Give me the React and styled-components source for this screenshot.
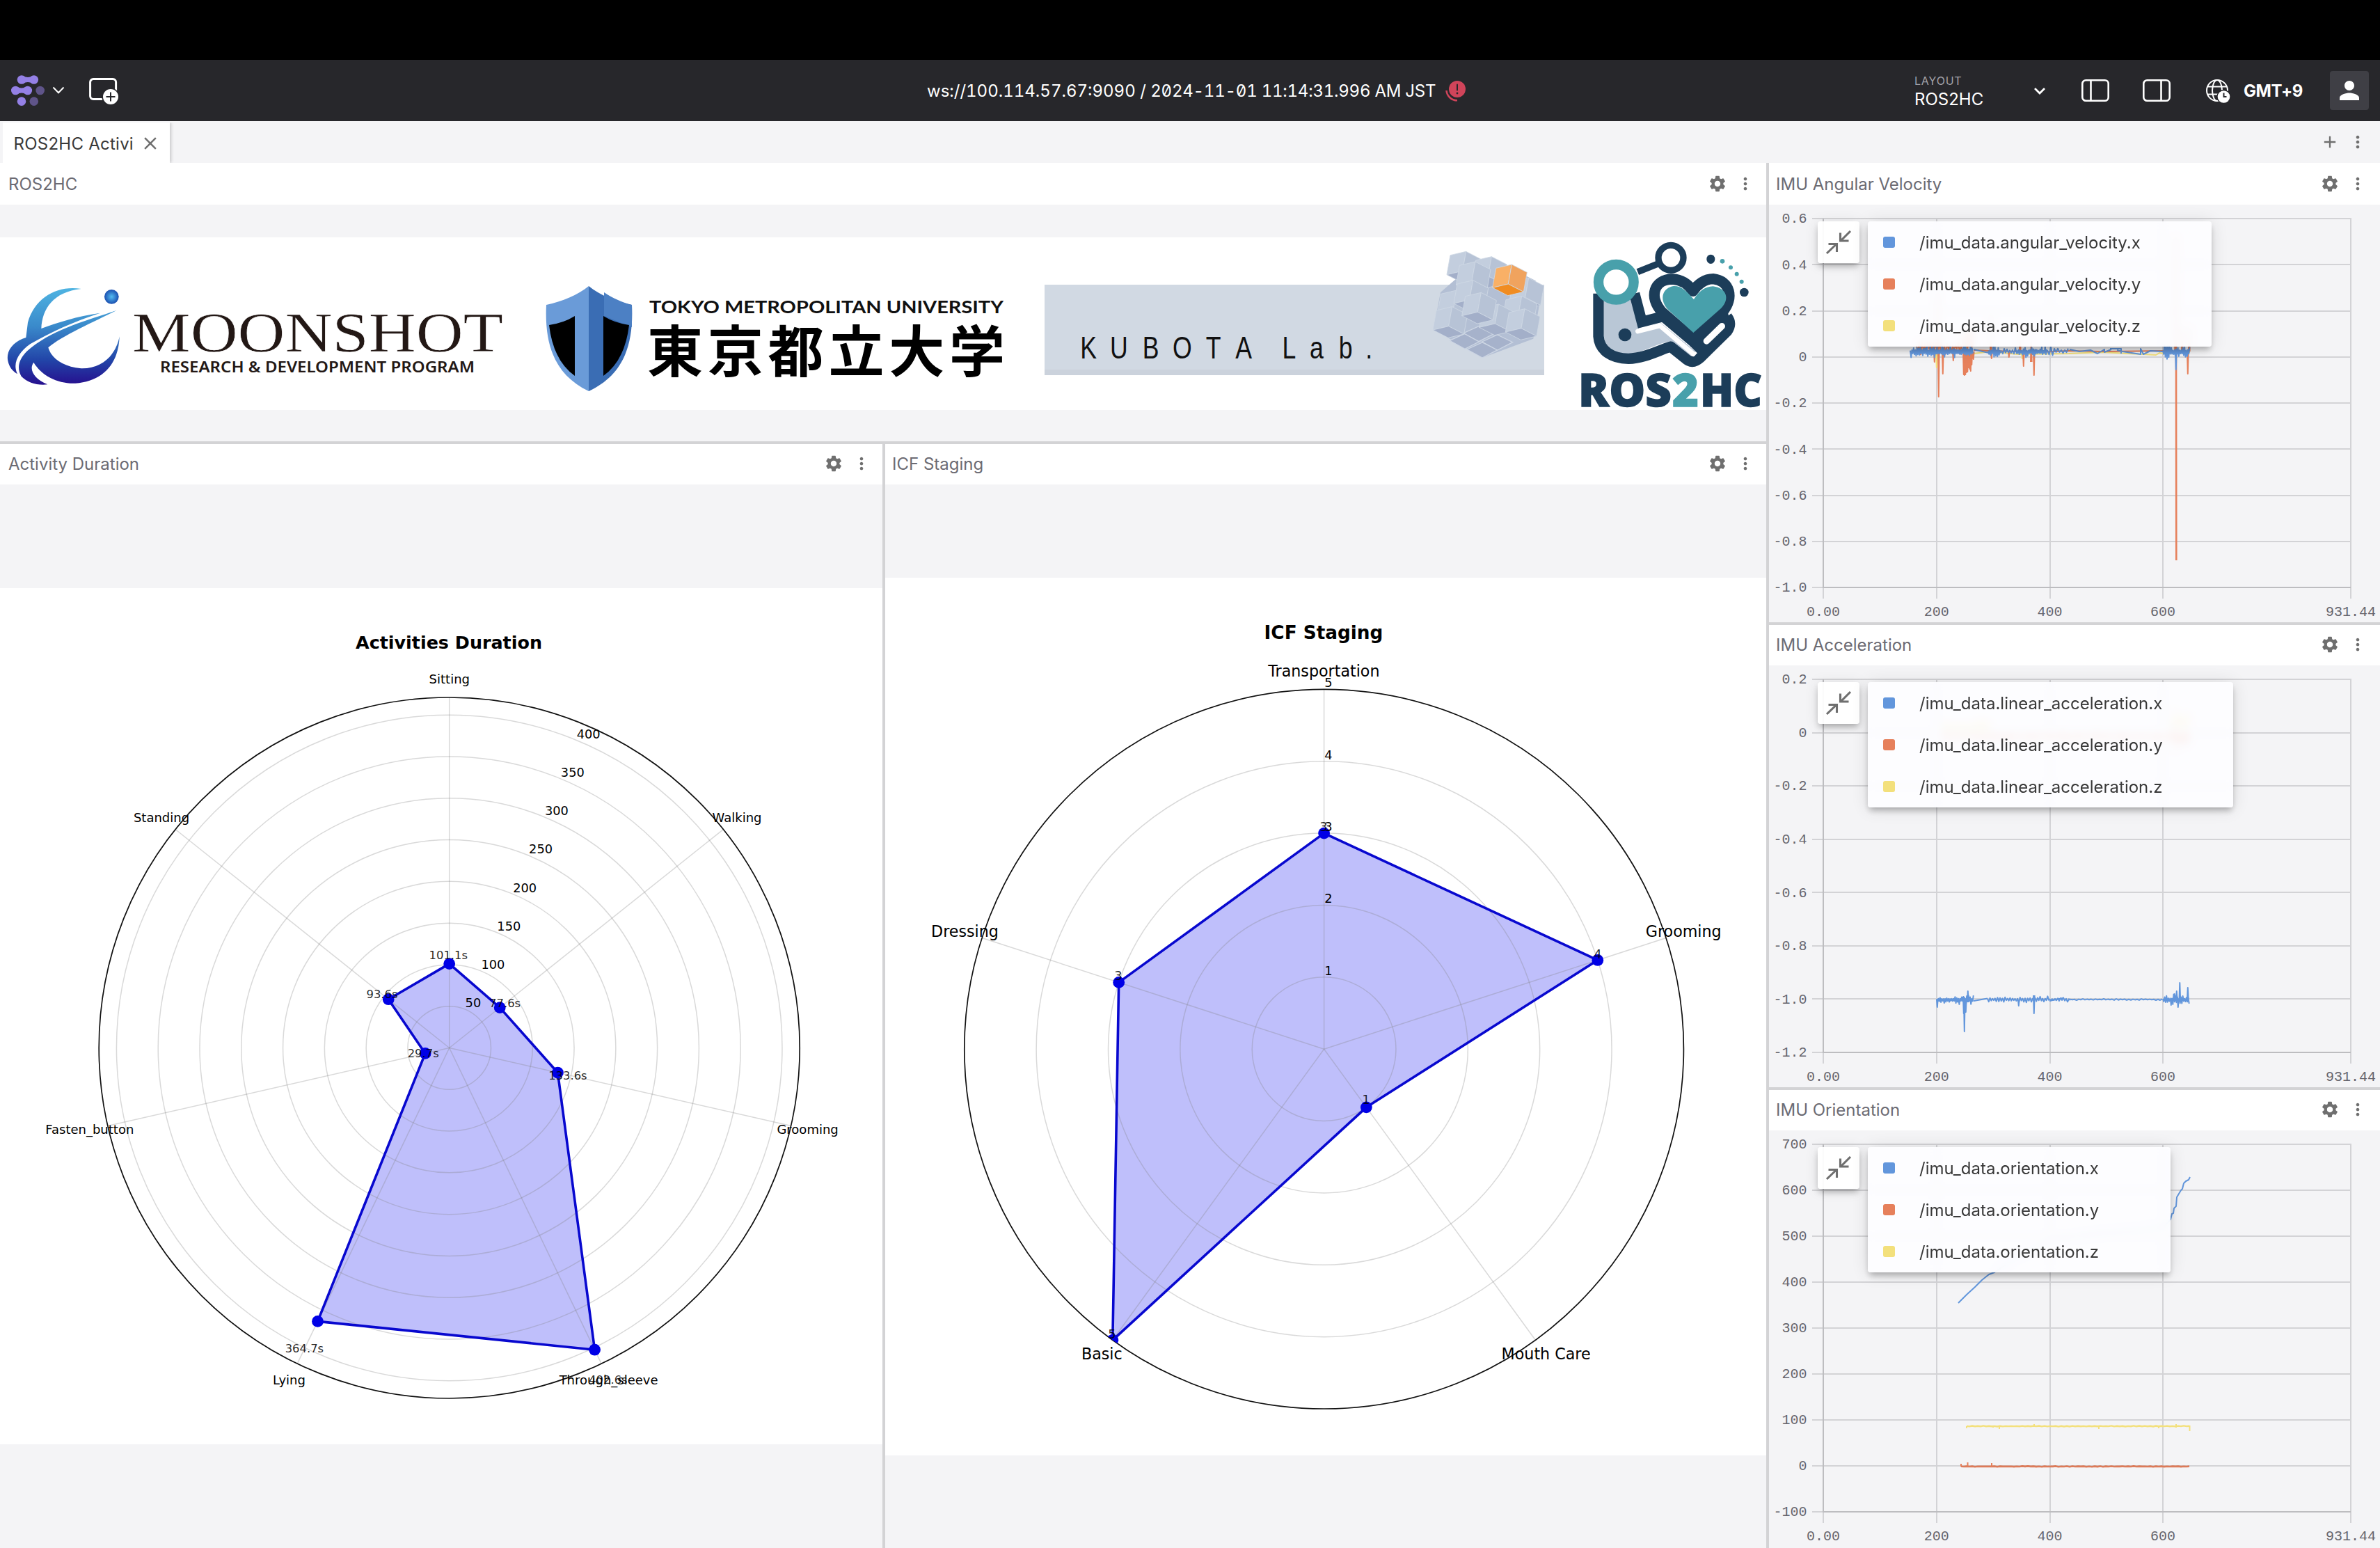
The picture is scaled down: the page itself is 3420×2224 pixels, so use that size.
import React from "react";
import styled, { createGlobalStyle } from "styled-components";
import { MdSettings, MdMoreVert, MdAdd, MdClose, MdPerson } from "react-icons/md";

const GlobalStyle = createGlobalStyle`
  * { box-sizing: border-box; }
  body { margin: 0; background: #000; font-family: Inter, "Liberation Sans", sans-serif; }
  svg { display: block; flex: none; }
`;

/* ---------- layout ---------- */

const Screen = styled.div`
  display: flex;
  flex-direction: column;
  width: 3420px;
  height: 2224px;
  padding-top: 86px;
  overflow: hidden;
  background: #000;
`;

const AppBar = styled.header`
  display: flex;
  align-items: center;
  flex: none;
  height: 88px;
  padding: 0 16px;
  color: #fff;
  background: #27272b;
`;

const BarStart = styled.div`
  display: flex;
  align-items: center;
  width: 1316px;
`;

const BarSource = styled.div`
  display: flex;
  align-items: center;
  gap: 12px;
  font-size: 24px;
  font-feature-settings: "tnum";
  white-space: pre;
`;

const Timestamp = styled.span`
  font-feature-settings: "tnum", "zero";
  letter-spacing: -0.24px;
`;

const BarEnd = styled.div`
  display: flex;
  align-items: center;
  margin-left: auto;
`;

const LayoutSelect = styled.div`
  display: flex;
  flex-direction: column;
  width: 164px;
  padding-top: 2px;
  line-height: 1;
`;

const LayoutCaption = styled.span`
  margin-bottom: 7px;
  color: #a3a2a9;
  font-size: 16px;
  letter-spacing: 0.8px;
`;

const LayoutName = styled.span`
  font-size: 24px;
`;

const BarIcon = styled.span`
  display: flex;
  margin-left: ${(p) => p.$gap}px;
`;

const ZoneLabel = styled.span`
  width: 84px;
  margin-left: 16px;
  font-size: 24px;
  font-weight: 700;
  letter-spacing: -0.4px;
  white-space: nowrap;
`;

const Avatar = styled.div`
  display: flex;
  align-items: center;
  justify-content: center;
  width: 56px;
  height: 56px;
  margin-left: 40px;
  border-radius: 4px;
  color: #fff;
  background: #3f3f45;
`;

const TabBar = styled.nav`
  display: flex;
  align-items: flex-end;
  flex: none;
  height: 60px;
  padding: 0 18px 0 4px;
  background: #f4f4f6;
`;

const Tab = styled.div`
  display: flex;
  align-items: center;
  gap: 9px;
  width: 240px;
  height: 58px;
  padding: 2px 0 0 15.5px;
  color: #393939;
  font-size: 24px;
  letter-spacing: 0.25px;
  white-space: nowrap;
  background: #fff;
  box-shadow: 2px 0 4px rgba(0, 0, 0, 0.18);
  clip-path: inset(0 -8px 0 0);
`;

const Tools = styled.div`
  display: flex;
  align-items: center;
  gap: 12px;
  height: 60px;
  margin-left: auto;
  color: #6f6f6f;
`;

const Workspace = styled.main`
  display: grid;
  flex: 1;
  grid-template-columns: 2538px 878px;
  gap: 4px;
  min-height: 0;
  background: #d3d3d5;
`;

const LeftArea = styled.div`
  display: grid;
  grid-template-rows: 400px 1586px;
  gap: 4px;
`;

const RadarRow = styled.div`
  display: grid;
  grid-template-columns: 1268px 1266px;
  gap: 4px;
`;

const PlotArea = styled.div`
  display: grid;
  grid-template-rows: 660px 664px 658px;
  gap: 4px;
`;

const PanelBox = styled.section`
  display: flex;
  flex-direction: column;
  min-width: 0;
  min-height: 0;
  background: #f4f4f6;
`;

const PanelHead = styled.div`
  display: flex;
  align-items: center;
  flex: none;
  height: ${(p) => (p.$first ? 60 : 58)}px;
  padding: ${(p) => (p.$first ? 0 : "0 0 2px")};
  padding-left: ${(p) => p.$start}px;
  padding-right: ${(p) => p.$end}px;
  color: #6c6b73;
  font-size: 24px;
  background: #fff;
`;

const PanelBody = styled.div`
  position: relative;
  display: flex;
  align-items: ${(p) => p.$align || "center"};
  flex: 1;
  min-height: 0;
`;

const Figure = styled.div`
  width: 100%;
  margin-top: ${(p) => p.$offset || 0}px;
  background: #fff;
`;

const Legend = styled.div`
  position: absolute;
  top: 24px;
  left: 70px;
  display: flex;
  align-items: flex-start;
  gap: 12px;
`;

const LegendToggle = styled.div`
  width: 60px;
  height: 60px;
  border-radius: 4px;
  background: rgba(255, 255, 255, 0.93);
  box-shadow: 0 6px 10px -2px rgba(0, 0, 0, 0.28), 0 2px 20px rgba(0, 0, 0, 0.1);
`;

const LegendList = styled.div`
  width: ${(p) => p.$width}px;
  border-radius: 4px;
  background: rgba(253, 253, 255, 0.93);
  backdrop-filter: blur(6px);
  box-shadow: 0 6px 10px -2px rgba(0, 0, 0, 0.28), 0 2px 24px rgba(0, 0, 0, 0.12);
`;

const LegendRow = styled.div`
  display: flex;
  align-items: center;
  gap: 35px;
  height: 60px;
  padding-left: 22px;
  color: #393939;
  font-size: 24px;
  white-space: nowrap;
`;

const Swatch = styled.span`
  width: 17px;
  height: 16px;
  border-radius: 3px;
  background: ${(p) => p.$color};
`;

const TickText = styled.text`
  fill: #66656d;
  font-family: "Liberation Mono", monospace;
  font-size: 20px;
`;

const FigText = styled.text`
  fill: #000;
  font-family: "DejaVu Sans", sans-serif;
`;

const WordmarkText = styled.text`
  font-family: "Open Sans", sans-serif;
  font-size: 65.5px;
  font-weight: 800;
  stroke-width: 1.4px;
`;

/* ---------- icons ---------- */

const LogoIcon = () => (
  <svg width="48" height="46" viewBox="0 0 48 46">
    <g fill="#9480e6">
      <circle cx="15" cy="7.5" r="6.3" />
      <circle cx="32.8" cy="7.5" r="6.3" />
      <path d="M17 1.8 Q24 6.4 31 1.8 V13.2 Q24 8.6 17 13.2Z" />
      <circle cx="6.3" cy="23" r="6.3" />
      <circle cx="23.8" cy="23" r="6.3" />
      <path d="M8 17.3 Q15 21.9 22 17.3 V28.7 Q15 24.1 8 28.7Z" />
      <circle cx="15" cy="38.6" r="6.3" />
    </g>
    <g fill="#5f5489">
      <circle cx="41.7" cy="23" r="6.3" />
      <circle cx="32.8" cy="38.6" r="6.3" />
    </g>
  </svg>
);

const ThinChevron = () => (
  <svg width="18" height="12" viewBox="0 0 18 12" fill="none" stroke="#fff" strokeWidth="2">
    <path d="M1.5 1.5 9 9.2 16.5 1.5" />
  </svg>
);

const BoldChevron = () => (
  <svg width="32" height="32" viewBox="0 0 32 32" fill="none" stroke="#fff" strokeWidth="2.8">
    <path d="M9 13 16 20 23 13" />
  </svg>
);

const AddPanelIcon = () => (
  <svg width="44" height="40" viewBox="0 0 44 40">
    <rect x="1.6" y="3.5" width="37" height="29" rx="4.5" fill="none" stroke="#fff" strokeWidth="3" />
    <circle cx="31" cy="29" r="12.6" fill="#27272b" />
    <circle cx="31" cy="29" r="11" fill="#fff" />
    <path d="M31 22.5V35.5M24.5 29H37.5" stroke="#27272b" strokeWidth="2" />
  </svg>
);

const AlertIcon = () => (
  <svg width="32" height="34" viewBox="0 0 32 34">
    <circle cx="19" cy="15" r="12" fill="#d0445a" />
    <path d="M19 8.5V16.5" stroke="#27272b" strokeWidth="2" strokeLinecap="round" />
    <circle cx="19" cy="21" r="1.4" fill="#27272b" />
    <path d="M3.5 17 A15.5 15.5 0 0 0 19 31.3" fill="none" stroke="#d0445a" strokeWidth="2.6" />
  </svg>
);

const SidebarIcon = ({ line }) => (
  <svg width="40" height="32" viewBox="0 0 40 32" fill="none" stroke="#fff" strokeWidth="2.6">
    <rect x="1.3" y="1.3" width="37.4" height="29.4" rx="5" />
    <path d={`M${line} 1V31`} />
  </svg>
);

const GlobeIcon = () => (
  <svg width="40" height="36" viewBox="0 0 40 36">
    <g fill="none" stroke="#fff" strokeWidth="2">
      <circle cx="18" cy="18" r="15" />
      <ellipse cx="18" cy="18" rx="7" ry="15" />
      <path d="M4 12.5H32M4 23.5H32" />
    </g>
    <circle cx="27.5" cy="27" r="10.2" fill="#27272b" />
    <circle cx="27.5" cy="27" r="8.8" fill="#fff" />
    <path d="M27.5 21.5V27H31.5" fill="none" stroke="#27272b" strokeWidth="2" />
  </svg>
);

const CollapseIcon = () => (
  <svg width="60" height="60" viewBox="0 0 60 60" fill="none" stroke="#6f6f6f" strokeWidth="3.1">
    <path d="M47 14 33 28M32.5 16.500V28H44.5" />
    <path d="M13 46 27 32.500M27.500 44V32.500H15.500" />
  </svg>
);

/* ---------- banner ---------- */

const iso = (x, y, pts) => pts.map(([a, b]) => `${x + a},${y + b}`).join(" ");

const Cube = ({ x, y, s = 1, colors = ["#c3cede", "#b7c3d6", "#a3afc9"] }) => {
  const T = [15 * s, -84 * s];
  const L = [-68 * s, 16 * s];
  const R = [66 * s, 34 * s];
  const add = (a, b) => [a[0] + b[0], a[1] + b[1]];
  return (
    <g stroke="#cfd8e5" strokeWidth="2.5" strokeLinejoin="round">
      <polygon points={iso(x, y, [[0, 0], T, add(T, L), L])} fill={colors[0]} />
      <polygon points={iso(x, y, [[0, 0], T, add(T, R), R])} fill={colors[1]} />
      <polygon points={iso(x, y, [[0, 0], L, add(L, R), R])} fill={colors[2]} />
    </g>
  );
};

const Tile = ({ x, y }) => (
  <polygon
    points={iso(x, y, [[0, -32], [66, 0], [0, 34], [-66, -2]])}
    fill="#a6b2cb"
    stroke="#cdd6e4"
    strokeWidth="4"
  />
);

const NAVY = "#1c3d59";
const TEAL = "#48a0ab";

const Banner = () => (
  <svg width="2538" height="248" viewBox="0 341 2538 248">
    <defs>
      <linearGradient id="moon" gradientUnits="userSpaceOnUse" x1="0" y1="40" x2="0" y2="455">
        <stop offset="0" stopColor="#4fb4e2" />
        <stop offset="0.4" stopColor="#3a8acb" />
        <stop offset="0.75" stopColor="#2245a8" />
        <stop offset="1" stopColor="#26118f" />
      </linearGradient>
      <radialGradient id="ball">
        <stop offset="0" stopColor="#54bdf2" />
        <stop offset="1" stopColor="#1a4fb0" />
      </radialGradient>
    </defs>

    <g transform="translate(0 400) scale(0.33333)" fill="url(#moon)">
      <path d="M350 45C250 28 150 80 120 190L112 255C60 270 25 310 34 355C40 385 55 400 75 412C55 370 72 325 130 283C210 235 320 185 432 149C330 163 250 190 178 216C182 130 230 58 350 45Z" />
      <path d="M502 138C380 180 240 215 135 298C80 340 70 385 92 422C120 450 160 462 205 457C150 435 122 395 145 362C180 420 250 455 325 452C440 445 512 370 515 250C500 330 440 390 350 388C270 380 222 345 208 298C270 245 400 190 502 138Z" />
      <circle cx="481" cy="79" r="31" fill="url(#ball)" />
    </g>
    <text x="190" y="505" fontFamily="'Liberation Serif', serif" fontSize="80" fill="#231815" stroke="#fff" strokeWidth="0.6" textLength="533" lengthAdjust="spacingAndGlyphs">MOONSHOT</text>
    <text x="230" y="534.5" fontFamily="'Noto Sans', sans-serif" fontWeight="600" fontSize="21.5" fill="#231815" textLength="452" lengthAdjust="spacingAndGlyphs">RESEARCH &amp; DEVELOPMENT PROGRAM</text>

    <path d="M846 411C830 424 808 433 785 438C782 500 800 540 846 562Z" fill="#6a9bd8" />
    <path d="M846 411C862 424 884 433 908 438C911 500 893 540 846 562Z" fill="#3a6db4" />
    <path d="M868 420C880 428 893 434 908 438V470L868 454Z" fill="#4c80c4" />
    <path d="M789 467Q810 464 826 454V540Q795 518 789 467Z" fill="#000" />
    <path d="M904 467Q883 464 867 454V540Q898 518 904 467Z" fill="#000" />
    <text x="933" y="449.5" fontFamily="Lato, sans-serif" fontWeight="700" fontSize="24" fill="#111" textLength="509" lengthAdjust="spacingAndGlyphs">TOKYO METROPOLITAN UNIVERSITY</text>
    <text x="930" y="533.5" fontFamily="'Noto Sans CJK JP', sans-serif" fontWeight="700" fontSize="80" fill="#000" textLength="514" lengthAdjust="spacing">東京都立大学</text>

    <rect x="1501" y="409" width="718" height="130" fill="#d1d9e3" />
    <rect x="1501" y="531" width="718" height="8" fill="#cbd2dc" />
    <text
      transform="scale(0.82 1)"
      x="1893 1945 2002 2055 2113 2165 2200 2247 2295 2346 2393"
      y="515"
      fontFamily="'Liberation Sans', sans-serif"
      fontSize="43.5"
      fill="#111"
    >
      KUBOTA Lab.
    </text>

    <g transform="translate(2040 340) scale(0.33333)">
      <polygon points="165,175 300,90 500,190 515,300 490,440 270,522 60,400 90,240" fill="#b3bfd4" />
      <Cube x={185} y={148} />
      <Cube x={295} y={170} />
      <Cube x={455} y={262} />
      <Cube x={225} y={192} />
      <Cube x={145} y={315} />
      <Cube x={215} y={272} />
      <Cube x={425} y={340} />
      <Tile x={270} y={488} />
      <Tile x={195} y={450} />
      <Tile x={335} y={455} />
      <Tile x={255} y={418} />
      <Cube x={125} y={386} />
      <Cube x={325} y={375} />
      <Cube x={438} y={395} />
      <Cube x={250} y={325} />
      <Cube x={382} y={204} colors={["#f9b066", "#f0a35e", "#f08c22"]} />

      <path d="M795 270V430C800 490 850 515 905 508C960 500 1020 460 1085 450L1165 515L1190 495L1040 372L945 400L915 270Z" fill="#b9c7d6" />
      <path d="M940 152 1030 116" stroke={NAVY} strokeWidth="28" />
      <circle cx="1083" cy="91" r="54" fill="#fff" stroke={NAVY} strokeWidth="28" />
      <g fill="none" stroke={NAVY} strokeWidth="46" strokeLinejoin="round">
        <path d="M771 245V430C775 492 830 526 900 526C970 524 1030 490 1082 474L1145 524Q1175 553 1207 524L1325 408Q1348 375 1325 345" />
        <path d="M926 245 958 367 1052 343" strokeLinejoin="miter" />
        <path d="M1040 335 1200 470" />
      </g>
      <path d="M1165 430 1325 310 1345 400 1215 520 1165 470Z" fill={NAVY} />
      <path d="M1178 440L1045 325C985 260 1010 183 1090 183C1130 185 1160 208 1178 235C1198 205 1230 182 1265 182C1340 190 1355 265 1308 322Z" fill="#fff" stroke={NAVY} strokeWidth="46" strokeLinejoin="round" />
      <path d="M1180 414L1068 312C1030 265 1050 220 1095 213C1130 212 1150 235 1182 270C1205 235 1230 215 1265 214C1325 222 1338 270 1300 308Z" fill={TEAL} />
      <path d="M940 408 1036 384 1180 506" fill="none" stroke="#fff" strokeWidth="20" strokeLinecap="round" />
      <path d="M1237 450 1303 386" stroke="#fff" strokeWidth="28" strokeLinecap="round" />
      <circle cx="847" cy="196" r="76" fill="#fff" stroke={TEAL} strokeWidth="43" />
      <circle cx="885" cy="423" r="28" fill={NAVY} />
      <ellipse cx="1255" cy="97" rx="18" ry="20" fill={NAVY} />
      <circle cx="1399" cy="240" r="19" fill={NAVY} />
      <g fill={TEAL}>
        <circle cx="1305" cy="106" r="10" />
        <circle cx="1341" cy="133" r="9" />
        <circle cx="1367" cy="161" r="9" />
        <circle cx="1388" cy="194" r="9" />
      </g>
    </g>
    <WordmarkText x="2268" y="584.3" fill={NAVY} stroke={NAVY} textLength="134" lengthAdjust="spacingAndGlyphs">ROS</WordmarkText>
    <WordmarkText x="2403" y="584.3" fill={TEAL} stroke={TEAL} textLength="38" lengthAdjust="spacingAndGlyphs">2</WordmarkText>
    <WordmarkText x="2443" y="584.3" fill={NAVY} stroke={NAVY} textLength="89" lengthAdjust="spacingAndGlyphs">HC</WordmarkText>
  </svg>
);

/* ---------- radar charts ---------- */

const polar = (cx, cy, r, deg) => {
  const a = (deg * Math.PI) / 180;
  return [cx + r * Math.sin(a), cy - r * Math.cos(a)];
};

const Radar = ({ id, top, left, width, height, cx, cy, radius, unit, rings, values, title, labels, ticks, points, fonts }) => {
  const step = 360 / values.length;
  const dots = values.map((v, i) => polar(cx, cy, v * unit, i * step));
  return (
    <svg width={width} height={height} viewBox={`${left} ${top} ${width} ${height}`}>
      <defs>
        <clipPath id={id}>
          <circle cx={cx} cy={cy} r={radius} />
        </clipPath>
      </defs>
      <polygon points={dots.map((d) => d.join(",")).join(" ")} fill="#0000f0" fillOpacity="0.25" />
      <g fill="none" stroke="#808080" strokeOpacity="0.3" strokeWidth="1.5">
        {rings.map((r) => (
          <circle key={r} cx={cx} cy={cy} r={r * unit} />
        ))}
        {values.map((_, i) => {
          const [x, y] = polar(cx, cy, radius, i * step);
          return <path key={i} d={`M${cx} ${cy}L${x} ${y}`} />;
        })}
      </g>
      <circle cx={cx} cy={cy} r={radius} fill="none" stroke="#111" strokeWidth="1.7" />
      <g clipPath={`url(#${id})`}>
        <polygon points={dots.map((d) => d.join(",")).join(" ")} fill="none" stroke="#0808cf" strokeWidth="3.6" strokeLinejoin="round" />
        {dots.map(([x, y], i) => (
          <circle key={i} cx={x} cy={y} r="8.4" fill="#0000e6" />
        ))}
      </g>
      {points.map(([t, x, y]) => (
        <FigText key={t + x} x={x} y={y} fontSize={fonts.point} textAnchor="middle" fillOpacity="0.85">{t}</FigText>
      ))}
      {ticks.map(([t, x, y]) => (
        <FigText key={t} x={x} y={y} fontSize={fonts.tick}>{t}</FigText>
      ))}
      {labels.map(([t, x, y]) => (
        <FigText key={t} x={x} y={y} fontSize={fonts.label} textAnchor="middle">{t}</FigText>
      ))}
      <FigText x={title[1]} y={title[2]} fontSize={fonts.title} fontWeight="700" textAnchor="middle">{title[0]}</FigText>
    </svg>
  );
};

const durationRings = [50, 100, 150, 200, 250, 300, 350, 400];

const duration = {
  id: "durationClip",
  left: 0, top: 845, width: 1268, height: 1230,
  cx: 645.7, cy: 1505.5, radius: 503.5, unit: 1.1957,
  rings: durationRings,
  values: [101.1, 77.6, 133.6, 402.6, 364.7, 29.7, 93.6],
  title: ["Activities Duration", 645, 931.5],
  fonts: { title: 25.4, label: 18, tick: 17.8, point: 16.4 },
  labels: [
    ["Sitting", 645.8, 982], ["Walking", 1059, 1181], ["Grooming", 1160.6, 1628.5],
    ["Through_sleeve", 874.6, 1988.5], ["Lying", 415.5, 1988.5],
    ["Fasten_button", 128.8, 1628.5], ["Standing", 232, 1181],
  ],
  ticks: durationRings.map((v) => {
    const [x, y] = polar(645.7, 1505.5, v * 1.1957, 22.5);
    return [String(v), x, y - 3];
  }),
  points: [
    ["101.1s", 644.3, 1377.5], ["77.6s", 725.6, 1447], ["133.6s", 815.9, 1550.5],
    ["402.6s", 873.9, 1988], ["364.7s", 437.4, 1943], ["29.7s", 608.2, 1519],
    ["93.6s", 549, 1434],
  ],
};

const staging = {
  id: "stagingClip",
  left: 1272, top: 829.5, width: 1266, height: 1261,
  cx: 1902.6, cy: 1506.7, radius: 516.8, unit: 103.36,
  rings: [1, 2, 3, 4],
  values: [3, 4, 1, 5, 3],
  title: ["ICF Staging", 1902, 917],
  fonts: { title: 26.3, label: 22.2, tick: 17.8, point: 17.8 },
  labels: [
    ["Transportation", 1902.4, 971], ["Grooming", 2419.2, 1345.6],
    ["Mouth Care", 2221.6, 1952.2], ["Basic", 1583.3, 1952.2], ["Dressing", 1386.5, 1345.6],
  ],
  ticks: [1, 2, 3, 4, 5].map((v) => [String(v), 1903.2, 1506.7 - v * 103.36 - 3]),
  points: [["3", 1902, 1193.5], ["4", 2295.9, 1376.5], ["1", 1962.9, 1585.5], ["5", 1598, 1922], ["3", 1607, 1407]],
};

/* ---------- line plots ---------- */

const BLUE = "#6296dc";
const ORANGE = "#e6805b";
const YELLOW = "#f3e07c";

const random = (seed) => {
  let s = seed;
  return () => {
    s = (s * 16807) % 2147483647;
    return s / 2147483647;
  };
};

const noise = (x0, x1, y, amp, seed, step = 1.2) => {
  const r = random(seed);
  const pts = [];
  for (let x = x0, i = 0; x <= x1; x += step, i += 1) {
    const k = r();
    const h = amp * (0.25 + 0.75 * k * k * k + 0.25 * k);
    pts.push(`${x.toFixed(1)},${(y + (i % 2 ? h : -h)).toFixed(1)}`);
  }
  return pts.join(" ");
};

const spike = (x, y0, y1) => `M${x} ${y0}L${x + 0.8} ${y1}L${x + 1.6} ${y0}`;

const VelocityTraces = () => (
  <g fill="none" strokeWidth="2" strokeLinejoin="round">
    <path stroke={YELLOW} d="M2836 508 2860 505 2900 509 2973 508 3020 506 3080 509 3098 510 3103 507 3110 508 3147 506" />
    <path stroke={YELLOW} d={[spike(2782, 505, 528), spike(2824, 508, 470), spike(2905, 506, 515)].join("")} />
    <g stroke={ORANGE}>
      <path d="M2836 503 2860 504 2930 506 2973 504 3020 505 3110 504" />
      <path d={[
        spike(2785, 505, 570), spike(2784, 505, 420), spike(2791, 505, 537), spike(2806, 505, 518), spike(2779, 505, 520),
        spike(2861, 505, 515), spike(2907, 505, 526), spike(2922, 505, 539), spike(2918, 520, 490), spike(2902, 505, 470),
        spike(2860, 505, 450), spike(2886, 505, 513), spike(3135, 505, 470), spike(3143, 505, 537), spike(3145, 505, 470),
        spike(2821, 505, 538), spike(2822, 505, 539), spike(2823.5, 505, 538), spike(2825, 505, 535), spike(2826.5, 505, 534),
        spike(2828, 505, 528), spike(2829.5, 505, 530), spike(2831, 505, 533), spike(2832.500, 505, 524), spike(2835, 505, 516),
      ].join("")} />
      <polyline points={noise(2820, 2836, 492, 20, 31, 0.8)} />
      <polyline points={noise(2754, 2820, 499, 9, 13, 2)} />
      <path strokeWidth="2.6" d="M3125.5 505 3126.5 340 3127 505 3127.3 805" />
    </g>
    <g stroke={BLUE}>
      <polyline points={noise(2745, 2836, 505.5, 7.5, 7)} />
      <path d="M2836 502 2858 507" />
      <polyline points={noise(2857, 2876, 505.5, 7, 19)} />
      <polyline points={noise(2876, 2900, 505, 5, 5, 2)} />
      <polyline points={noise(2898, 2942, 505.5, 7, 23)} />
      <polyline points={noise(2942, 2974, 504.5, 5, 37, 2.5)} />
      <path d="M2974 502 2988 505 3004 503 3014 508 3024 502V506L3034 502M3032 501H3048V508M3042 503 3050 505 3076 509V501L3080 509 3090 504 3108 505" />
      <polyline points={noise(3108, 3147, 505.5, 8.5, 41)} />
      <path d={spike(3126, 505, 531)} />
    </g>
  </g>
);

const AccelerationTraces = () => (
  <g fill="none" strokeWidth="2" strokeLinejoin="round">
    <polyline stroke={ORANGE} strokeWidth="3" points={noise(2790, 3147, 1058, 5, 9, 2)} />
    <polyline stroke={YELLOW} strokeWidth="3" points={noise(2790, 2860, 1045, 9, 11, 1.5)} />
    <polyline stroke={YELLOW} points={noise(3120, 3147, 1038, 16, 15)} />
    <polyline stroke={ORANGE} points={noise(3120, 3147, 1060, 16, 9)} />
    <g stroke={BLUE}>
      <polyline points={noise(2783, 2836, 1436.5, 5.5, 3)} />
      <path d="M2836 1438 2856 1434.5" />
      <polyline points={noise(2856, 2945, 1436, 4.4, 51, 1.8)} />
      <path d="M2945 1438 2964 1434" />
      <polyline points={noise(2945, 2975, 1436, 2.8, 57, 2)} />
      <polyline points={noise(2975, 3108, 1436, 0.9, 61, 3)} />
      <polyline points={noise(3108, 3147, 1436.5, 6.5, 71, 1.3)} />
      <path d={[
        spike(2783, 1436, 1447), spike(2822, 1436, 1482), spike(2821, 1432, 1456), spike(2824, 1436, 1454), spike(2827, 1440, 1424),
        spike(2900, 1436, 1445), spike(2922, 1430, 1456), spike(3127, 1436, 1424), spike(3131.5, 1436, 1412), spike(3143, 1436, 1419),
        spike(3124, 1436, 1428), spike(3129, 1436, 1447), spike(3119, 1436, 1444),
      ].join("")} />
    </g>
  </g>
);

const OrientationTraces = () => (
  <g fill="none" strokeWidth="2" strokeLinejoin="round">
    <path stroke={BLUE} d="M2814 1872 2826 1860 2838 1849 2848 1839 2858 1831 2866 1828 2900 1805 2946 1782 3010 1772 3080 1766 3110 1762 3119 1752 3121 1744 3123 1743 3124 1736 3127 1733 3128 1720 3131 1715 3134 1710 3136 1708 3138 1700 3141 1697 3145 1695 3147 1691" />
    <polyline stroke={YELLOW} strokeWidth="2.4" points={noise(2826, 3147, 2049, 0.5, 21, 4)} />
    <path stroke={YELLOW} d="M2826 2049V2052M2864 2049V2051M2873 2049V2053M2923 2046V2050M3016 2049V2053M3102 2049V2052M3127 2046V2051M3146.5 2048V2056" />
    <polyline stroke="#dd7a58" strokeWidth="2.6" points={noise(2818, 3147, 2106.8, 0.4, 27, 4)} />
    <path stroke={ORANGE} d="M2818 2103V2107M2827.500 2101V2107M2862 2102V2107" />
  </g>
);

const Plot = ({ top, height, y0, y1, labels, children }) => {
  const step = (y1 - y0) / (labels.length - 1);
  const columns = [["0.00", 2620], ["200", 2782.7], ["400", 2945.6], ["600", 3108], ["931.44", 3378]];
  return (
    <svg width="878" height={height} viewBox={`2542 ${top} 878 ${height}`}>
      <g stroke="#d3d3d6" strokeWidth="2">
        {labels.map((l, i) => (
          <path key={l} d={`M2604 ${Math.round(y0 + i * step)}H3379`} />
        ))}
        {columns.map(([l, x]) => (
          <path key={l} d={`M${Math.round(x)} ${y0}V${y1 + 16}`} />
        ))}
      </g>
      <path d={`M2620 ${y0}V${y1}H3378`} fill="none" stroke="#bdbdc0" strokeWidth="2" />
      {labels.map((l, i) => (
        <TickText key={l} x="2596.500" y={y0 + i * step + 6.3} textAnchor="end">{l}</TickText>
      ))}
      {columns.map(([l, x]) => (
        <TickText key={l} x={x} y={y1 + 40.5} textAnchor="middle">{l}</TickText>
      ))}
      {children}
    </svg>
  );
};

/* ---------- panels ---------- */

const Panel = ({ title, first, start = 12, end = 16, align, children }) => (
  <PanelBox>
    <PanelHead $first={first} $start={start} $end={end}>
      {title}
      <Tools>
        <MdSettings size={28} />
        <MdMoreVert size={28} />
      </Tools>
    </PanelHead>
    <PanelBody $align={align}>{children}</PanelBody>
  </PanelBox>
);

const PlotLegend = ({ topic, width }) => (
  <Legend>
    <LegendToggle>
      <CollapseIcon />
    </LegendToggle>
    <LegendList $width={width}>
      {[["x", BLUE], ["y", ORANGE], ["z", YELLOW]].map(([axis, color]) => (
        <LegendRow key={axis}>
          <Swatch $color={color} />
          {`/imu_data.${topic}.${axis}`}
        </LegendRow>
      ))}
    </LegendList>
  </Legend>
);

export default function App() {
  return (
    <Screen>
      <GlobalStyle />
      <AppBar>
        <BarStart>
          <LogoIcon />
          <BarIcon $gap={11}>
            <ThinChevron />
          </BarIcon>
          <BarIcon $gap={35}>
            <AddPanelIcon />
          </BarIcon>
        </BarStart>
        <BarSource>
          <span>
            ws://100.114.57.67:9090 / <Timestamp>2024-11-01 11:14:31.996 AM JST</Timestamp>
          </span>
          <AlertIcon />
        </BarSource>
        <BarEnd>
          <LayoutSelect>
            <LayoutCaption>LAYOUT</LayoutCaption>
            <LayoutName>ROS2HC</LayoutName>
          </LayoutSelect>
          <BoldChevron />
          <BarIcon $gap={44}>
            <SidebarIcon line={13.5} />
          </BarIcon>
          <BarIcon $gap={48}>
            <SidebarIcon line={26.5} />
          </BarIcon>
          <BarIcon $gap={49}>
            <GlobeIcon />
          </BarIcon>
          <ZoneLabel>GMT+9</ZoneLabel>
          <Avatar>
            <MdPerson size={42} />
          </Avatar>
        </BarEnd>
      </AppBar>
      <TabBar>
        <Tab>
          ROS2HC Activi
          <MdClose size={30} color="#6f6f6f" />
        </Tab>
        <Tools>
          <MdAdd size={28} />
          <MdMoreVert size={28} />
        </Tools>
      </TabBar>
      <Workspace>
        <LeftArea>
          <Panel title="ROS2HC" first>
            <Figure $offset={2}>
              <Banner />
            </Figure>
          </Panel>
          <RadarRow>
            <Panel title="Activity Duration">
              <Figure>
                <Radar {...duration} />
              </Figure>
            </Panel>
            <Panel title="ICF Staging" start={10}>
              <Figure>
                <Radar {...staging} />
              </Figure>
            </Panel>
          </RadarRow>
        </LeftArea>
        <PlotArea>
          <Panel title="IMU Angular Velocity" first start={10} end={18} align="flex-start">
            <Plot top={294} height={600} y0={314} y1={844} labels={["0.6", "0.4", "0.2", "0", "-0.2", "-0.4", "-0.6", "-0.8", "-1.0"]}>
              <VelocityTraces />
            </Plot>
            <PlotLegend topic="angular_velocity" width={494} />
          </Panel>
          <Panel title="IMU Acceleration" start={10} end={18} align="flex-start">
            <Plot top={956} height={606} y0={976} y1={1512} labels={["0.2", "0", "-0.2", "-0.4", "-0.6", "-0.8", "-1.0", "-1.2"]}>
              <AccelerationTraces />
            </Plot>
            <PlotLegend topic="linear_acceleration" width={525} />
          </Panel>
          <Panel title="IMU Orientation" start={10} end={18} align="flex-start">
            <Plot top={1624} height={600} y0={1644} y1={2172} labels={["700", "600", "500", "400", "300", "200", "100", "0", "-100"]}>
              <OrientationTraces />
            </Plot>
            <PlotLegend topic="orientation" width={435} />
          </Panel>
        </PlotArea>
      </Workspace>
    </Screen>
  );
}
